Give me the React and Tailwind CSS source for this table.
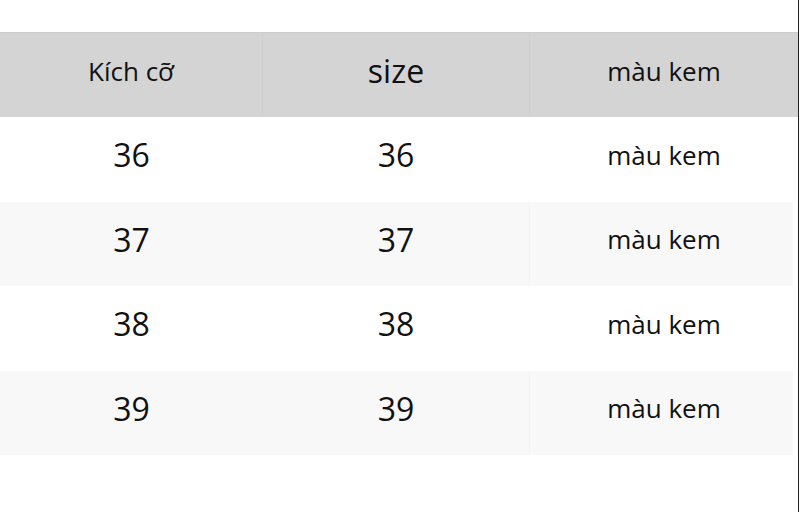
import React from 'react';

const rows = ['36', '37', '38', '39'];

export default function App() {
  return (
    <div
      className="w-[800px] h-[512px] bg-white overflow-hidden flex"
      style={{ fontFamily: '"Open Sans", "Noto Sans", sans-serif' }}
    >
      <div className="w-[798px] pt-8 flex flex-col text-[#111111]">
        {/* Header */}
        <div className="grid grid-cols-[263px_267px_1fr] h-[85px] bg-[#d4d4d4] border-t border-[#cccccc]">
          <div className="flex items-center justify-center pb-2 text-[26px] border-r border-[#cfcfcf]">Kích cỡ</div>
          <div className="flex items-center justify-center pb-2 text-[32px] border-r border-[#cfcfcf]">size</div>
          <div className="flex items-center justify-center pb-2 text-[26px]">màu kem</div>
        </div>

        {/* Body */}
        {rows.map((n, i) => {
          const striped = i % 2 === 1;
          return (
            <div
              key={n}
              className={`grid grid-cols-[263px_267px_1fr] h-[84.5px] mr-[5px] ${striped ? 'bg-[#f8f8f8]' : 'bg-white'}`}
            >
              <div className="flex items-center justify-center pb-2 text-[32px]">{n}</div>
              <div className={`flex items-center justify-center pb-2 text-[32px] border-r ${striped ? 'border-[#f3f3f3]' : 'border-white'}`}>{n}</div>
              <div className="flex items-center justify-center pb-2 text-[26px] pl-[5px]">màu kem</div>
            </div>
          );
        })}
      </div>
      <div className="w-px h-full bg-[#222222]" />
    </div>
  );
}
